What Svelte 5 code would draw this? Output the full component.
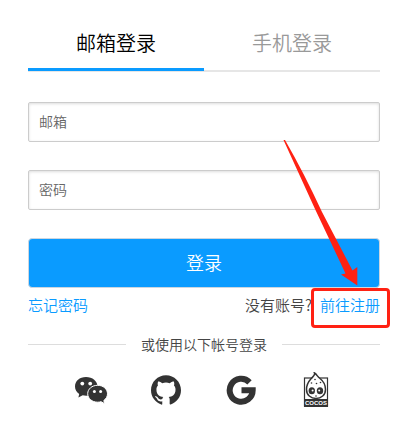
<script lang="ts">
	let tab = $state('email');
	let account = $state('');
	let password = $state('');

	const tabs = [
		{ id: 'email', label: '邮箱登录', field: '邮箱' },
		{ id: 'phone', label: '手机登录', field: '手机' },
	];
	const current = $derived(tabs.find((t) => t.id === tab) ?? tabs[0]);
</script>

<main class="login">
	<div class="tabs" role="tablist">
		{#each tabs as t}
			<button class="tab" class:active={tab === t.id} type="button" role="tab" aria-selected={tab === t.id} onclick={() => (tab = t.id)}>{t.label}</button>
		{/each}
	</div>

	<form onsubmit={(e) => e.preventDefault()}>
		<input class="field" type="text" aria-label={current.field} placeholder={current.field} bind:value={account} />
		<input class="field" type="password" aria-label="密码" placeholder="密码" bind:value={password} />
		<button class="submit" type="submit">登录</button>
	</form>

	<div class="links">
		<a href="#forgot">忘记密码</a>
		<span class="register">
			<span>没有账号?</span>
			<span class="target">
				<a href="#register">前往注册</a>
				<span class="mark"></span>
				<svg class="arrow" viewBox="0 0 76 148" aria-hidden="true">
					<path d="M1.500 2 3 2Q22 35 40 74L70.500 132.500 75.300 129V147.500L59 136.500 63.500 135.500 33 71Z" fill="#ff2113" />
				</svg>
			</span>
		</span>
	</div>

	<div class="divider"><span>或使用以下帐号登录</span></div>

	<div class="social">
		<a href="#wechat" aria-label="微信">
			<svg width="34" height="28" viewBox="0 0 34 28">
				<path d="M12 1C5.500 1 1 5.100 1 10.500c0 3.200 1.600 5.800 4.200 7.500L4.400 21.500l4.300-2.200c1.100.3 2.200.5 3.500.5 6.300 0 11.300-4 11.300-9.300S18.500 1 12 1Z" fill="#333" />
				<path d="M23.700 9.300c-5.700 0-10 3.700-10 8.400s4.300 8.500 10 8.500c1.200 0 2.300-.2 3.300-.5l3.700 2-.9-3.200c2.300-1.600 3.700-4 3.700-6.700 0-4.800-4.300-8.500-9.800-8.500Z" fill="#333" stroke="#fff" stroke-width="1" />
				<g fill="#fff">
					<circle cx="8.300" cy="7.600" r="1.900" />
					<circle cx="16.200" cy="7.600" r="1.900" />
					<circle cx="20.400" cy="15.400" r="1.500" />
					<circle cx="26.600" cy="15.400" r="1.500" />
				</g>
			</svg>
		</a>
		<a href="#github" aria-label="GitHub">
			<svg width="30" height="30" viewBox="0 0 24 24">
				<path fill="#333" d="M12 .297c-6.630 0-12 5.373-12 12 0 5.303 3.438 9.800 8.205 11.385.6.113.82-.258.82-.577 0-.285-.01-1.040-.015-2.040-3.338.724-4.042-1.610-4.042-1.610C4.422 18.070 3.633 17.700 3.633 17.700c-1.087-.744.084-.729.084-.729 1.205.084 1.838 1.236 1.838 1.236 1.070 1.835 2.809 1.305 3.495.998.108-.776.417-1.305.76-1.605-2.665-.3-5.466-1.332-5.466-5.930 0-1.310.465-2.380 1.235-3.220-.135-.303-.54-1.523.105-3.176 0 0 1.005-.322 3.300 1.230.96-.267 1.980-.399 3-.405 1.020.006 2.040.138 3 .405 2.280-1.552 3.285-1.230 3.285-1.230.645 1.653.24 2.873.12 3.176.765.84 1.230 1.910 1.230 3.220 0 4.610-2.805 5.625-5.475 5.920.42.36.81 1.096.81 2.220 0 1.606-.015 2.896-.015 3.286 0 .315.21.690.825.570C20.565 22.092 24 17.592 24 12.297c0-6.627-5.373-12-12-12" />
			</svg>
		</a>
		<a href="#google" aria-label="Google">
			<svg width="30" height="30" viewBox="0 0 30 30">
				<path d="M23.500 7.300A11.500 11.500 0 1 0 26.700 15.300H15.500" fill="none" stroke="#333" stroke-width="6" />
			</svg>
		</a>
		<a href="#cocos" aria-label="Cocos">
			<svg width="26" height="36" viewBox="0 0 26 36">
				<rect x="1.500" y="6" width="23" height="28" fill="#fff" stroke="#333" stroke-width="1.200" />
				<rect x="1" y="27" width="24" height="8" fill="#333" />
				<path d="M11.500 1c.8 2-1 3-3.500 5.800C5.300 9.800 3.500 13.500 3.500 17.500c0 5.500 4.300 9 9.500 9s9.500-3.500 9.500-9c0-4-2.300-8.500-5.500-11C14.200 4.500 14 2.500 11.500 1Z" fill="#fff" stroke="#333" stroke-width="1.500" />
				<g fill="#333">
					<ellipse cx="8.800" cy="18.800" rx="3.200" ry="3.500" />
					<ellipse cx="17" cy="18.800" rx="3.200" ry="3.500" />
					<circle cx="12" cy="7.500" r=".8" />
					<circle cx="8.500" cy="11" r=".8" />
					<circle cx="13.500" cy="11.500" r=".8" />
					<circle cx="17.500" cy="10.500" r=".8" />
					<circle cx="13" cy="24" r=".8" />
				</g>
				<circle cx="9.600" cy="18.500" r="1" fill="#fff" />
				<circle cx="16.200" cy="18.500" r="1" fill="#fff" />
				<text x="13" y="33" text-anchor="middle" fill="#fff">COCOS</text>
			</svg>
		</a>
	</div>
</main>

<style>
	:global(body){margin:0;background:#fff}
	.login{padding:16px 21px 20px 28px;font-family:"Noto Sans CJK SC",sans-serif;font-size:15px;font-weight:350;color:#444}
	a{color:#0a9bff;text-decoration:none}
	button,input{box-sizing:border-box;font-family:inherit;font-weight:inherit}

	.tabs{display:flex;border-bottom:2px solid #e6e6e6}
	.tab{flex:1;height:55px;margin-bottom:-1px;padding:2px 0 0;border:0;border-bottom:3px solid transparent;background:none;font-size:20px;line-height:50px;color:#999;cursor:pointer}
	.tab.active{color:#000;border-bottom-color:#0a9bff}

	form{display:flex;flex-direction:column;gap:28px;margin-top:30px}
	.field{width:100%;height:40px;padding:0 10px 2px;border:1px solid #ccc;border-radius:2px;box-shadow:inset 0 1px 3px #ddd;font-size:14px;color:#333;outline:0}
	.field::placeholder{color:#666;opacity:1}
	.submit{height:50px;padding:0 0 2px;border:1px solid #ccd6e0;border-radius:4px;background:#0a9bff;color:#fff;font-size:18px;cursor:pointer}

	.links{display:flex;justify-content:space-between;line-height:34px}
	.register{display:flex;gap:8px}
	.target{position:relative}
	.mark{position:absolute;top:0;left:-9px;right:-10px;height:34px;border:3px solid #ff2113;border-radius:4px;pointer-events:none}
	.arrow{position:absolute;right:22px;bottom:36px;width:76px;height:148px;pointer-events:none}

	.divider{display:flex;align-items:center;gap:15px;margin-top:12px;font-size:14px;line-height:20px}
	.divider::before,.divider::after{content:"";flex:1;height:1px;background:#ddd}

	.social{display:flex;align-items:center;height:36px;margin-top:18px;padding:0 27px 0 25px}
	.social a{flex:1;display:flex;justify-content:center}
	.social svg{display:block}
	.social text{font:bold 6px "Liberation Sans",sans-serif}
</style>
